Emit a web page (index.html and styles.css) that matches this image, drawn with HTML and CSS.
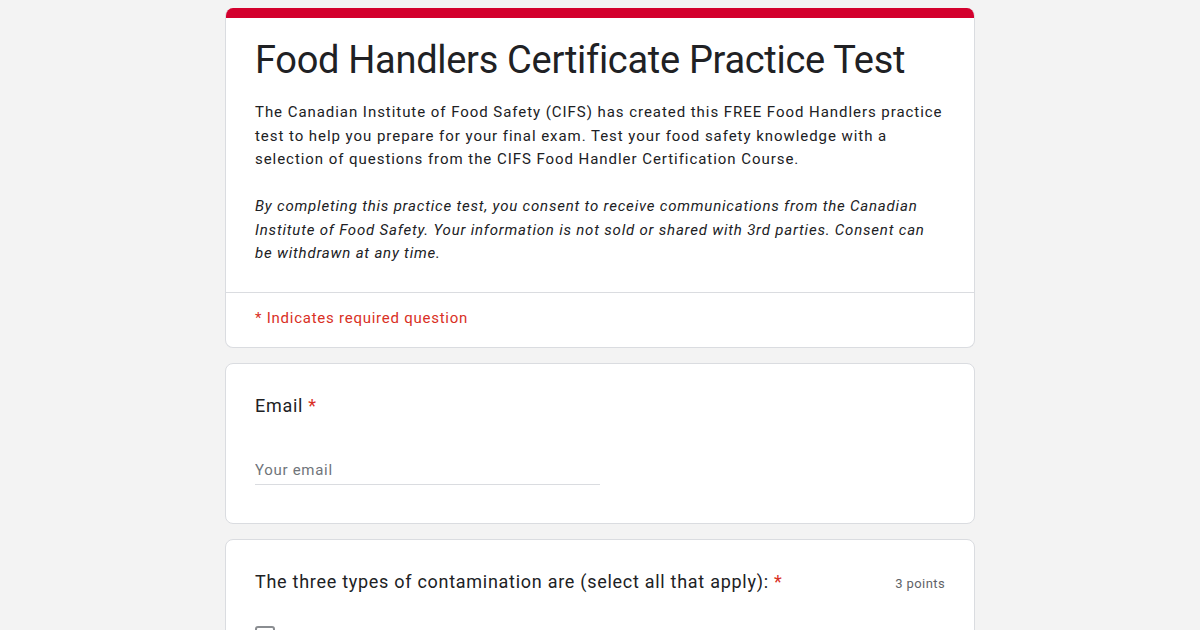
FILE: index.html
```html
<!DOCTYPE html>
<html lang="en">
<head>
    <meta charset="UTF-8">
    <meta name="viewport" content="width=device-width, initial-scale=1.0">
    <title>Food Handlers Certificate Practice Test</title>
    <link rel="stylesheet" href="styles.css">
</head>
<body>
    <div class="form">
        <div class="card header-card">
            <div class="accent"></div>
            <div class="header-body">
                <h1 class="title">Food Handlers Certificate Practice Test</h1>
                <div class="description">
                    <p>The Canadian Institute of Food Safety (CIFS) has created this FREE Food Handlers practice test to help you prepare for your final exam. Test your food safety knowledge with a selection of questions from the CIFS Food Handler Certification Course.</p>
                    <p class="consent">By completing this practice test, you consent to receive communications from the Canadian Institute of Food Safety. Your information is not sold or shared with 3rd parties. Consent can be withdrawn at any time.</p>
                </div>
            </div>
            <div class="required-note">* Indicates required question</div>
        </div>

        <div class="card question">
            <div class="question-title">Email <span class="star">*</span></div>
            <div class="text-input">
                <input type="email" placeholder="Your email">
            </div>
        </div>

        <div class="card question">
            <div class="question-head">
                <div class="question-title">The three types of contamination are (select all that apply): <span class="star">*</span></div>
                <div class="points">3 points</div>
            </div>
            <div class="options">
                <span class="checkbox" role="checkbox" aria-checked="false"></span>
            </div>
        </div>
    </div>
</body>
</html>
```

FILE: styles.css
```css
body {
    margin: 0;
    background-color: #f3f3f3;
    font-family: Roboto, Arial, sans-serif;
    color: #202124;
}

.form {
    width: 750px;
    margin: 8px auto 0;
    display: flex;
    flex-direction: column;
    gap: 15px;
}

.card {
    background: white;
    border: 1px solid #dadce0;
    border-radius: 8px;
    overflow: hidden;
}

.header-card {
    border-top: none;
}

.accent {
    height: 10px;
    background-color: #d3002d;
}

.header-body {
    padding: 18px 29px 26px;
    border-bottom: 1px solid #dadce0;
}

.title {
    margin: 0;
    font-family: Roboto, Arial, sans-serif;
    font-weight: 400;
    font-size: 38px;
    line-height: 48px;
    letter-spacing: -0.3px;
    color: #202124;
}

.description {
    margin-top: 17px;
    font-size: 15px;
    line-height: 23.5px;
    letter-spacing: 0.95px;
}

.description p {
    margin: 0;
}

.description .consent {
    margin-top: 23.5px;
    font-style: italic;
    letter-spacing: 0.8px;
}

.required-note {
    padding: 13px 29px 17px;
    font-size: 15px;
    line-height: 24px;
    letter-spacing: 0.75px;
    color: #d93025;
}

.question {
    padding: 28px 29px 38px;
}

.question-head {
    display: flex;
    justify-content: space-between;
    align-items: baseline;
}

.question-title {
    font-size: 18px;
    line-height: 28px;
    letter-spacing: 0.72px;
}

.star {
    color: #d93025;
}

.points {
    font-size: 13px;
    color: #5f6368;
    letter-spacing: 0.4px;
}

.text-input {
    margin-top: 35px;
    width: 345px;
    border-bottom: 1px solid #dadce0;
}

.text-input input {
    width: 100%;
    border: none;
    outline: none;
    padding: 6px 0 5px;
    font-family: Roboto, Arial, sans-serif;
    font-size: 15px;
    letter-spacing: 0.7px;
    color: #202124;
}

.text-input input::placeholder {
    color: #70757a;
}

.options {
    margin-top: 30px;
}

.checkbox {
    display: block;
    width: 20px;
    height: 20px;
    border: 2px solid #8a8d91;
    border-radius: 3px;
    box-sizing: border-box;
}
```
